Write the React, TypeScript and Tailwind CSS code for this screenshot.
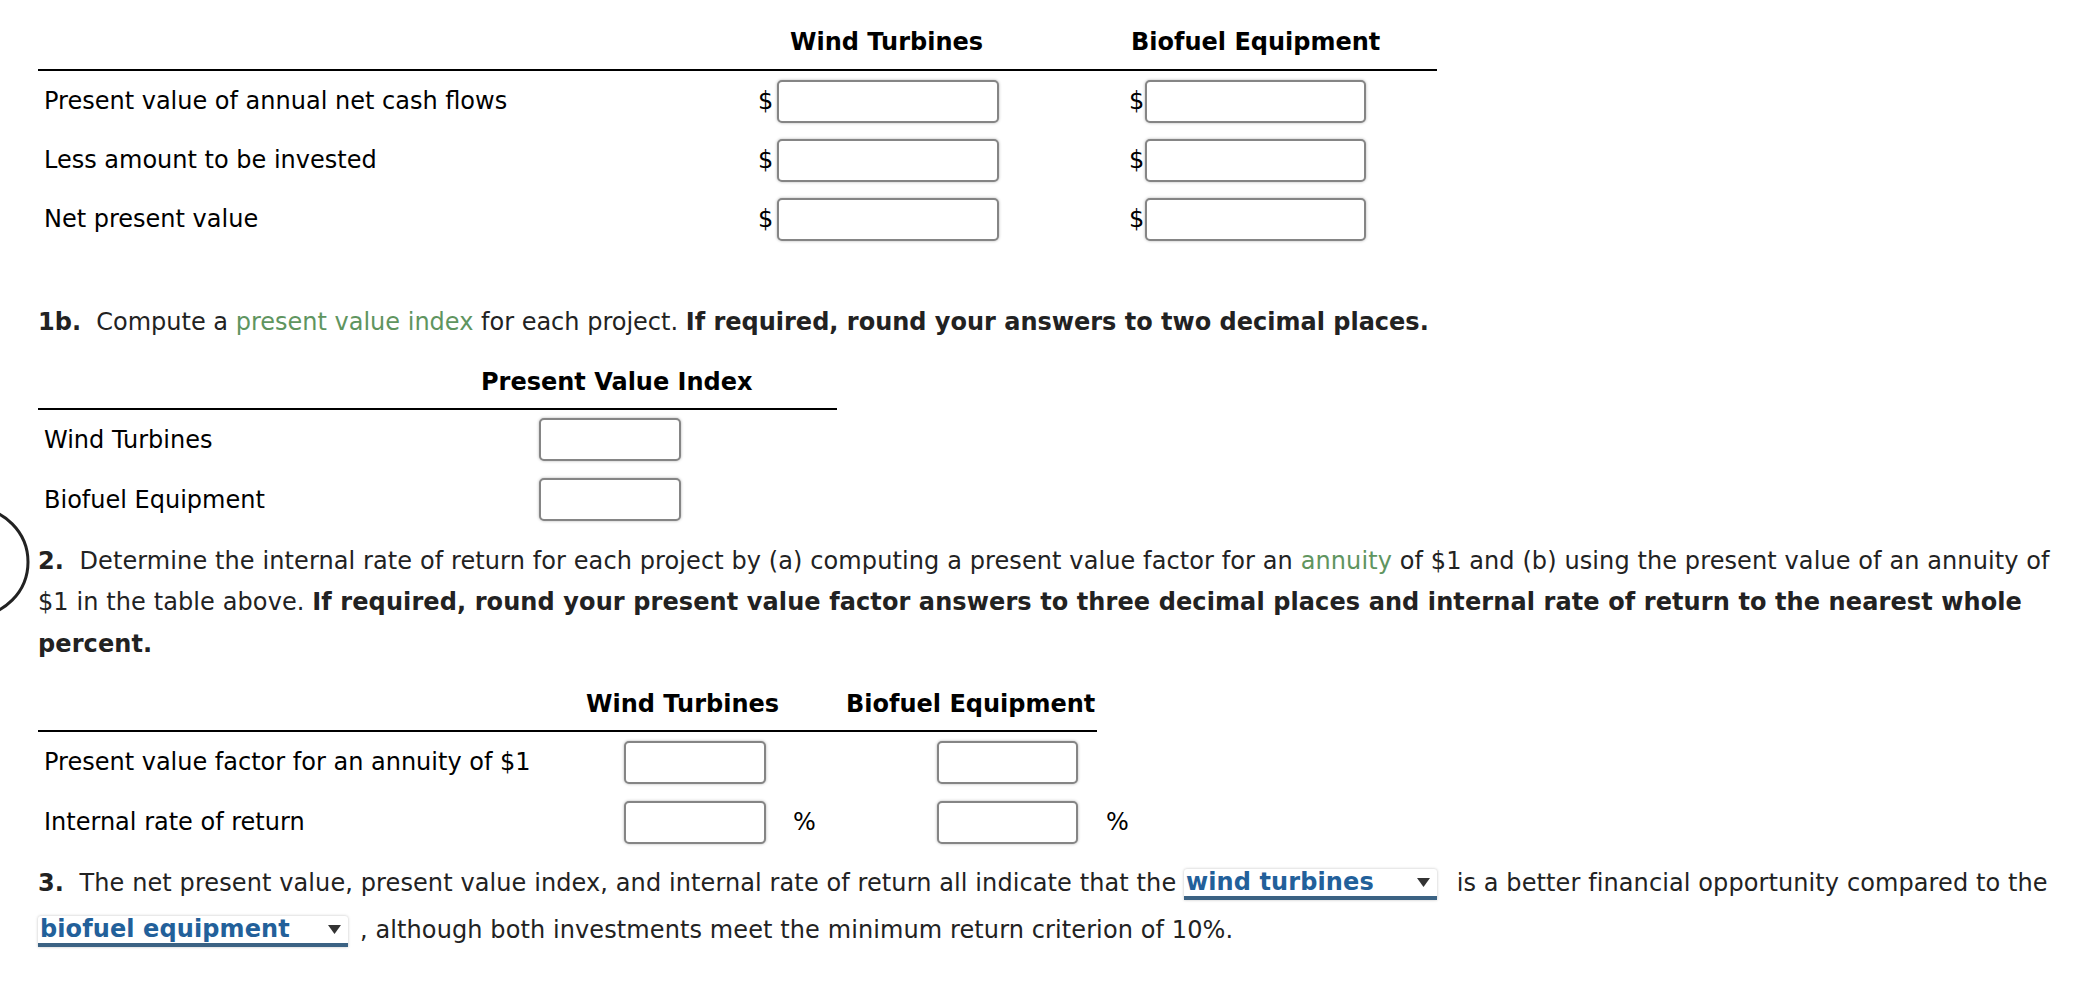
import React from 'react';

/**
 * Capital investment analysis worksheet: NPV, present value index, IRR.
 */

const box = "h-[43px] shrink-0 rounded-[5px] border-2 border-[#858585] bg-white shadow-[0_0_3px_rgba(0,0,0,0.3)]";

function Dropdown({ label, width }: { label: string; width: string }) {
  return (
    <span className={`inline-flex items-center justify-between ${width} h-[31px] align-middle bg-white border-b-[4px] border-[#3b6283] rounded-t-[3px] shadow-[0_0_3px_rgba(0,0,0,0.25)] pl-[2px] pr-[7px] mr-[12px] font-bold text-[#22609a] leading-none`}>
      <span>{label}</span>
      <svg width="13" height="9" viewBox="0 0 13 9"><polygon points="0,0 13,0 6.5,9" fill="#333" /></svg>
    </span>
  );
}

export default function App() {
  const npvRows = ['Present value of annual net cash flows', 'Less amount to be invested', 'Net present value'];

  return (
    <div className="relative min-h-[982px] w-[2082px] bg-white pl-[38px] text-[24px] leading-[30px] text-black font-['DejaVu_Sans',Verdana,sans-serif]">
      {/* partial circle peeking from the left edge */}
      <svg className="absolute left-0 top-[505px]" width="32" height="114" viewBox="0 0 32 114">
        <circle cx="-26" cy="57" r="54" fill="none" stroke="#222" strokeWidth="3" />
      </svg>

      {/* table 1 */}
      <div className="w-[1399px]">
        <div className="flex h-[71px] items-end border-b-2 border-black pb-[13px] font-bold leading-[28px]">
          <div className="w-[714px] shrink-0" />
          <div className="w-[368px] shrink-0 pl-[38px]">Wind Turbines</div>
          <div className="pl-[11px]">Biofuel Equipment</div>
        </div>
        {npvRows.map(r => (
          <div key={r} className="flex h-[59px] items-center pt-[1px]">
            <div className="w-[714px] shrink-0 pl-[6px]">{r}</div>
            <div className="flex w-[368px] shrink-0 items-center pl-[6px]">
              <span className="w-[19px]">$</span>
              <div className={`${box} w-[222px]`} />
            </div>
            <div className="flex items-center pl-[9px]">
              <span className="w-[16px]">$</span>
              <div className={`${box} w-[221px]`} />
            </div>
          </div>
        ))}
      </div>

      <p className="mt-[54px] leading-[41.5px] text-[#222]">
        <b>1b.</b>&nbsp; Compute a <span className="text-[#5f955f]">present value index</span> for each project. <b>If required, round your answers to two decimal places.</b>
      </p>

      {/* table 2 */}
      <div className="w-[799px]">
        <div className="flex h-[66px] items-end border-b-2 border-black pb-[12px] font-bold leading-[28px]">
          <div className="pl-[443px]">Present Value Index</div>
        </div>
        {['Wind Turbines', 'Biofuel Equipment'].map(r => (
          <div key={r} className="flex h-[60px] items-center">
            <div className="w-[501px] shrink-0 pl-[6px]">{r}</div>
            <div className={`${box} w-[142px]`} />
          </div>
        ))}
      </div>

      <p className="mt-[11px] w-[2030px] leading-[41.5px] text-[#222] tracking-[0.1px]">
        <b>2.</b>&nbsp; Determine the internal rate of return for each project by (a) computing a present value factor for an <span className="text-[#5f955f]">annuity</span> of $1 and (b) using the present value of an annuity of $1 in the table above. <b>If required, round your present value factor answers to three decimal places and internal rate of return to the nearest whole percent.</b>
      </p>

      {/* table 3 */}
      <div className="w-[1059px]">
        <div className="flex h-[67px] items-end border-b-2 border-black pb-[12px] font-bold leading-[28px]">
          <div className="w-[548px] shrink-0" />
          <div className="w-[260px] shrink-0">Wind Turbines</div>
          <div className="whitespace-nowrap">Biofuel Equipment</div>
        </div>
        {[
          { label: 'Present value factor for an annuity of $1', pct: false },
          { label: 'Internal rate of return', pct: true },
        ].map(r => (
          <div key={r.label} className="flex h-[60px] items-center">
            <div className="w-[586px] shrink-0 pl-[6px]">{r.label}</div>
            <div className="flex w-[313px] shrink-0 items-center">
              <div className={`${box} w-[142px]`} />
              {r.pct && <span className="ml-[27px]">%</span>}
            </div>
            <div className="flex shrink-0 items-center">
              <div className={`${box} w-[141px]`} />
              {r.pct && <span className="ml-[28px]">%</span>}
            </div>
          </div>
        ))}
      </div>

      <p className="mt-[8px] w-[2030px] leading-[47px] text-[#222] tracking-[0.1px]">
        <b>3.</b>&nbsp; The net present value, present value index, and internal rate of return all indicate that the <Dropdown label="wind turbines" width="w-[253px]" /> is a better financial opportunity compared to the <Dropdown label="biofuel equipment" width="w-[310px]" />, although both investments meet the minimum return criterion of 10%.
      </p>
    </div>
  );
}
